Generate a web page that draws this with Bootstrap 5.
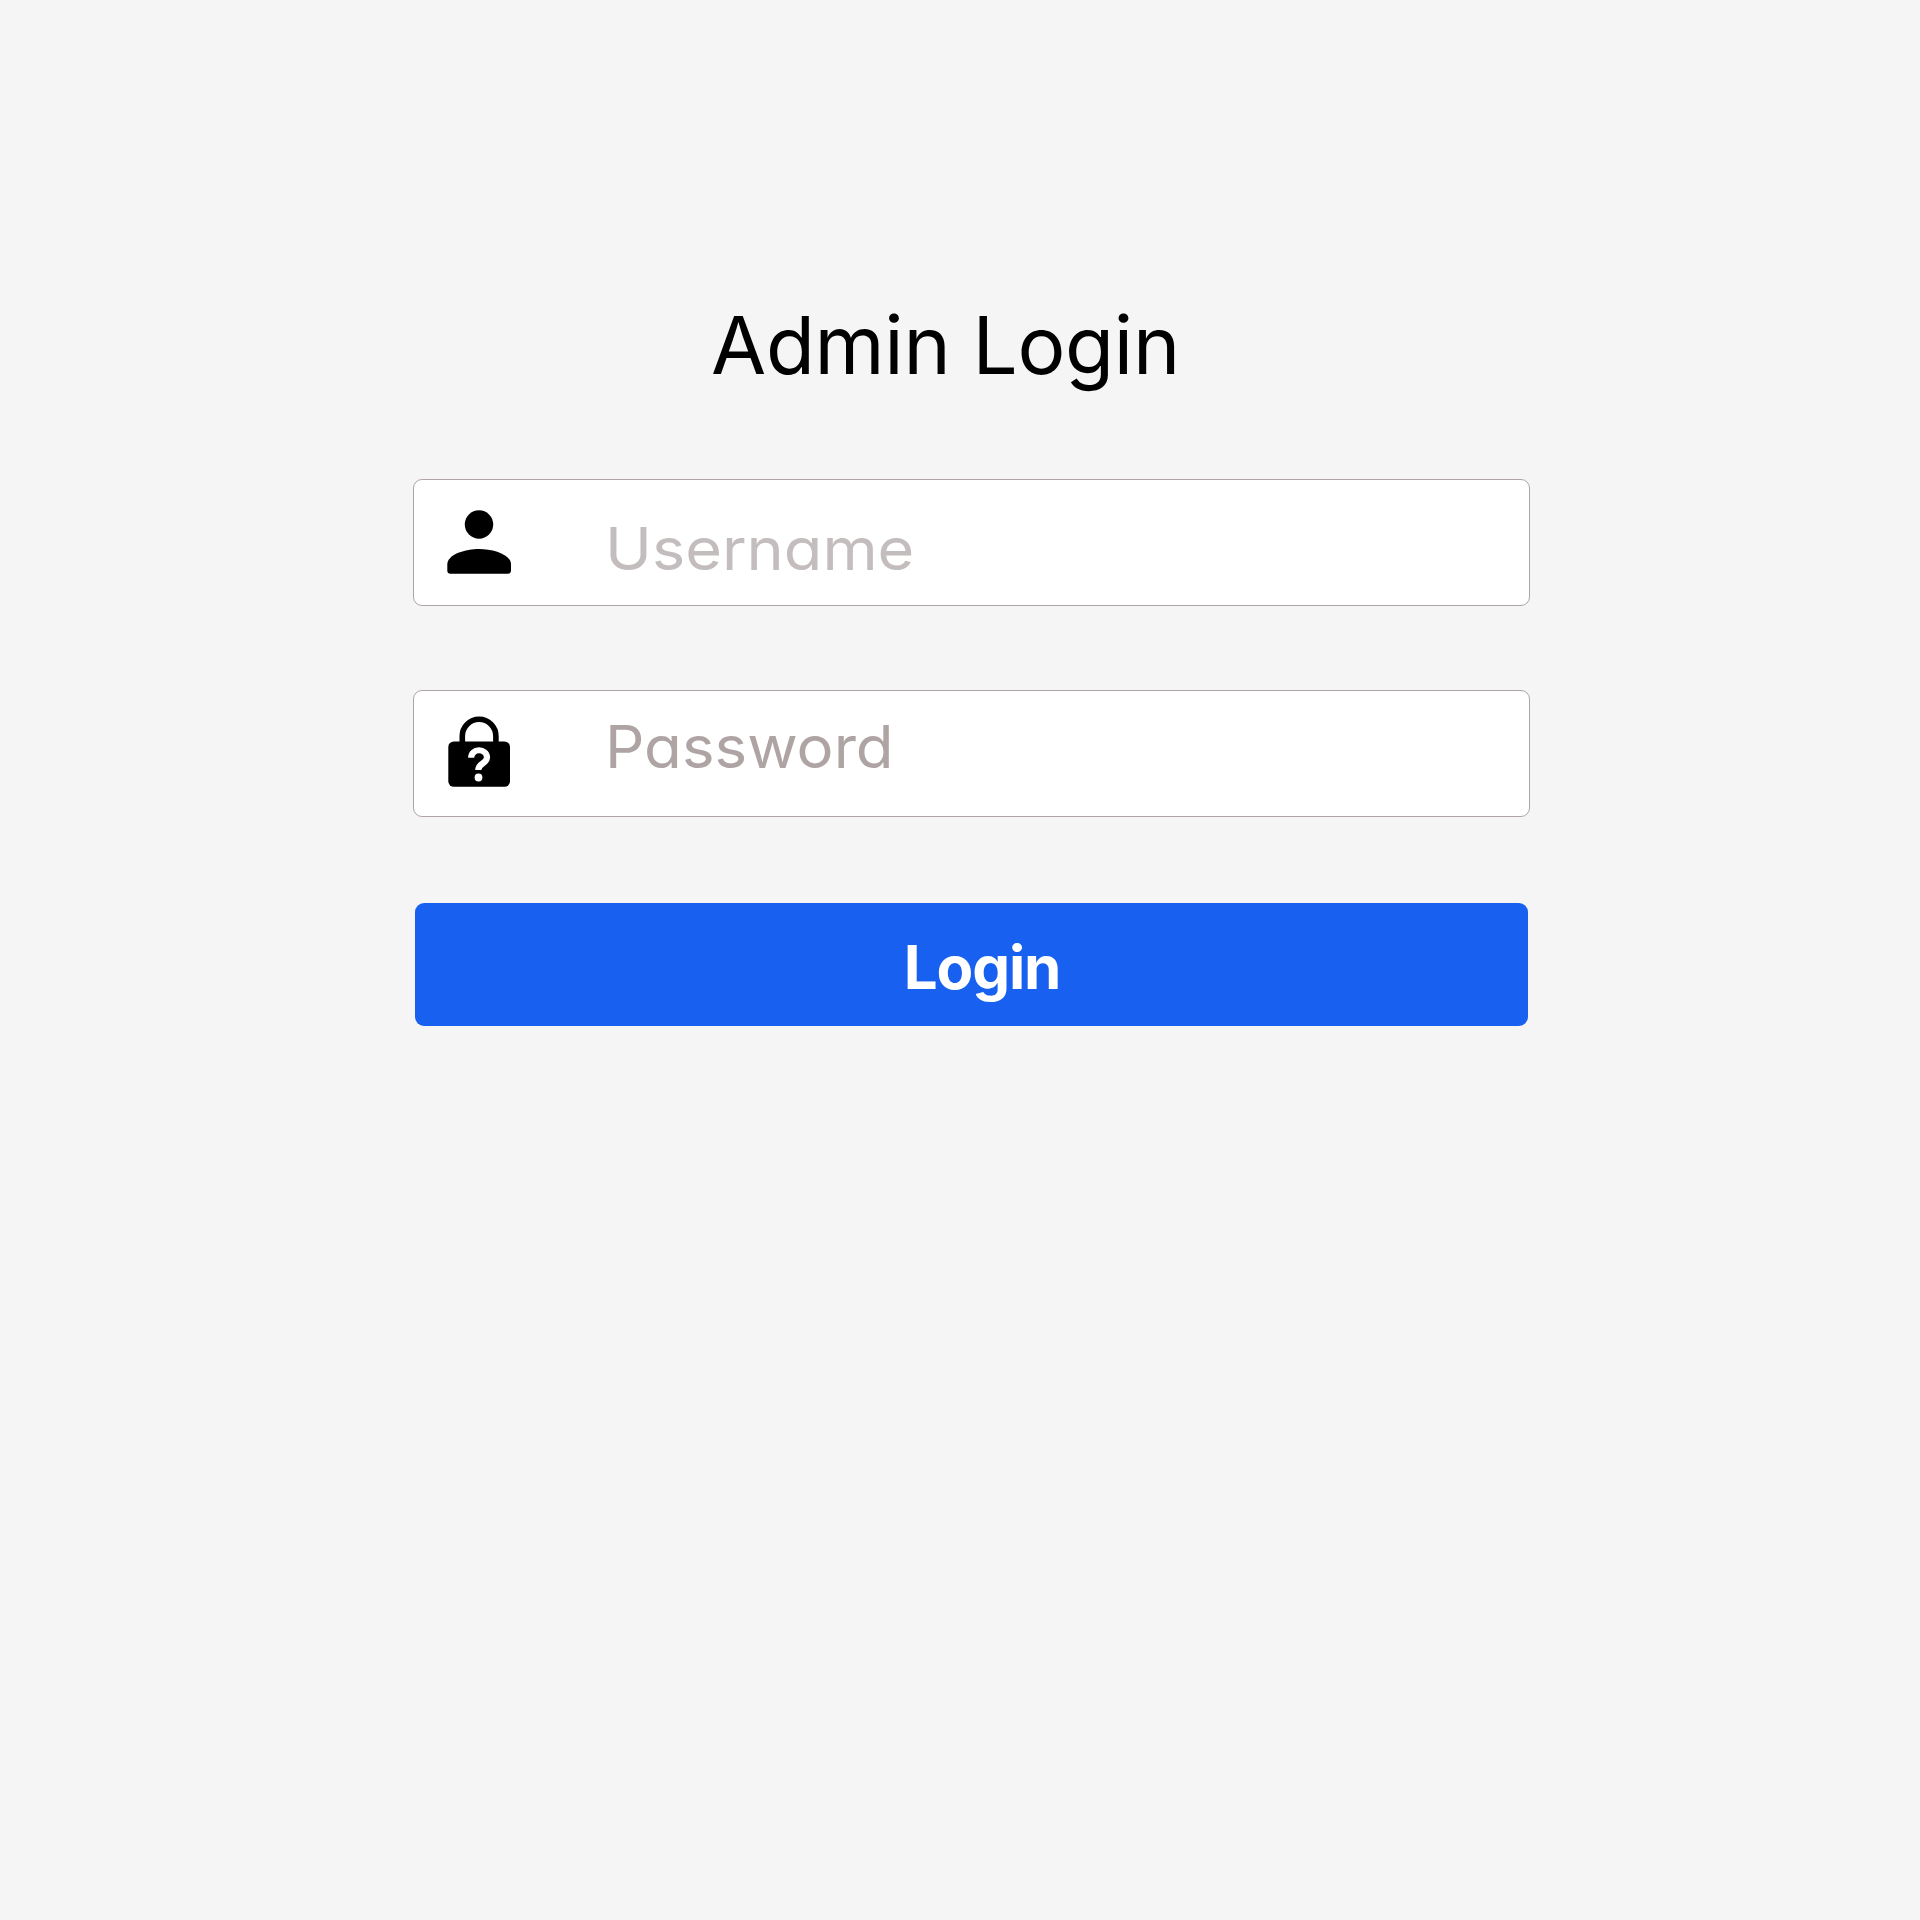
<!DOCTYPE html>
<html lang="en">
<head>
<meta charset="utf-8">
<meta name="viewport" content="width=device-width, initial-scale=1">
<title>Admin Login</title>
<link href="https://cdn.jsdelivr.net/npm/bootstrap@5.3.0/dist/css/bootstrap.min.css" rel="stylesheet">
<style>
body { background: #f5f5f5; font-family: Inter, "Open Sans", sans-serif; color: #000; }
.login-page { padding: 297px 390px 0 413px; }
.login-title { font-size: 80px; line-height: 96px; font-weight: 400; margin: 0 0 86px 298px; white-space: nowrap; letter-spacing: -.31px; }
.field-box { height: 127px; border: 1px solid #afa4a5; border-radius: 9px; background: #fff; padding: 0; cursor: text; }
.field-icon { width: 64px; height: 76px; margin: 23px 94px 0 33px; flex: none; }
.field-text { font-size: 59px; line-height: 72px; font-weight: 400; font-feature-settings: "cv11"; white-space: nowrap; transform-origin: left center; }
.user-text { color: #c4bdbe; margin-top: 33px; transform: scaleX(1.068); }
.pass-text { color: #afa4a4; margin-top: 20px; transform: scaleX(1.047); }
.user-field { margin-bottom: 84px; }
.pass-field { margin-bottom: 86px; }
.login-btn { height: 123px; width: 1113px; margin-left: 2px; background: #1860f0; border: 0; border-radius: 9px; color: #fff; font-size: 60px; line-height: 72px; font-weight: 700; letter-spacing: -1.1px; padding: 5px 0 0 21px; }
.login-btn:hover { background: #1153dc; color: #fff; }
</style>
</head>
<body>
<main class="login-page">
  <h1 class="login-title">Admin Login</h1>
  <form class="d-flex flex-column">
    <label class="form-control field-box user-field d-flex align-items-start">
      <svg class="field-icon" viewBox="447 503 64 76" aria-hidden="true">
        <circle cx="479" cy="524.5" r="14.2"/>
        <path d="M447.3 564.500C447.300 554 466 549 479.100 549S511 554 511 564.500V570.500Q511 573.700 507.800 573.700H450.500Q447.300 573.700 447.300 570.500Z"/>
      </svg>
      <span class="field-text user-text">Username</span>
    </label>
    <label class="form-control field-box pass-field d-flex align-items-start">
      <svg class="field-icon" viewBox="447 714 64 76" aria-hidden="true">
        <path d="M462.300 744V736A16.800 16.700 0 0 1 495.900 736V744" fill="none" stroke="#000" stroke-width="5.600"/>
        <rect x="448.300" y="741.500" width="61.700" height="45.300" rx="5.500"/>
        <path d="M471.200 757.700A7.900 7.300 0 0 1 487 757.400C487 763.800 478.300 763 478.300 769.900" fill="none" stroke="#fff" stroke-width="6.200"/>
        <circle cx="478.500" cy="777.500" r="3.900" fill="#fff"/>
      </svg>
      <span class="field-text pass-text">Password</span>
    </label>
    <button type="button" class="btn btn-primary login-btn">Login</button>
  </form>
</main>
<script src="https://cdn.jsdelivr.net/npm/bootstrap@5.3.0/dist/js/bootstrap.bundle.min.js"></script>
</body>
</html>
